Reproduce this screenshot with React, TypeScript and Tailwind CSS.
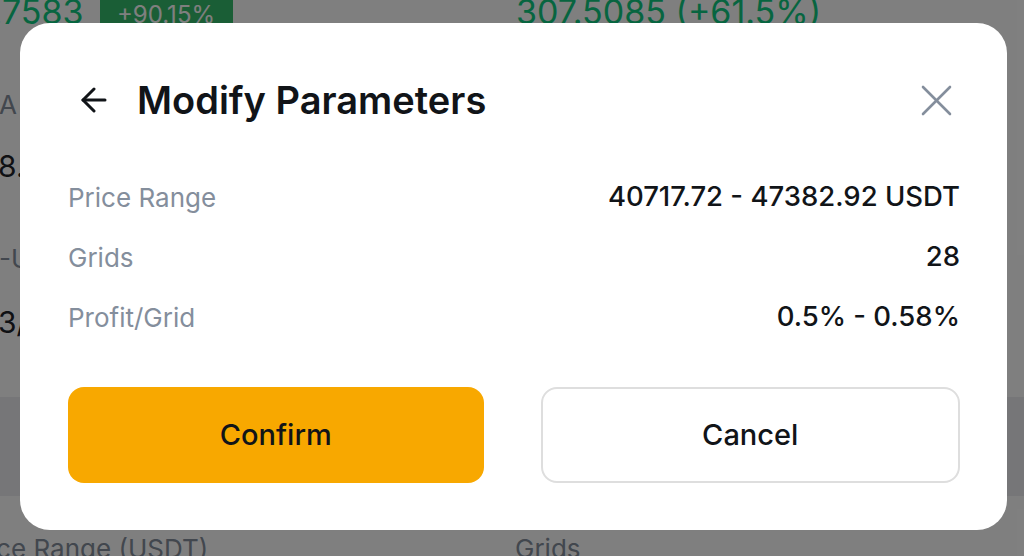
const rows = [
  { label: 'Price Range', value: '40717.72 - 47382.92 USDT' },
  { label: 'Grids', value: '28' },
  { label: 'Profit/Grid', value: '0.5% - 0.58%' },
];

function BackArrow() {
  return (
    <svg width="26" height="26" viewBox="0 0 26 26" fill="none" stroke="#111418" strokeWidth="3" strokeLinecap="round" strokeLinejoin="round">
      <path d="M24 13H2" />
      <path d="M13 2L2 13L13 24" />
    </svg>
  );
}

function CloseIcon() {
  return (
    <svg width="31" height="31" viewBox="0 0 31 31" fill="none" stroke="#848e9c" strokeWidth="2.6" strokeLinecap="round">
      <path d="M2 2L29 29" />
      <path d="M29 2L2 29" />
    </svg>
  );
}

export default function App() {
  return (
    <div className="relative w-full h-[556px] overflow-hidden bg-white font-['Inter',sans-serif]">
      {/* page behind the dialog */}
      <div className="flex flex-col">
        <div className="flex h-[30px] items-start -mt-[8px]">
          <div className="w-[516px] flex items-start">
            <span className="-ml-[28px] text-[34px] leading-[40px] text-[#0ecb81]">0.7583</span>
            <span className="ml-[16px] mt-[4px] h-[34px] w-[133px] text-center bg-[#34bc6c] text-white text-[24px] leading-[38px]">+90.15%</span>
          </div>
          <span className="text-[34px] leading-[40px] text-[#0ecb81]">307.5085 (+61.5%)</span>
        </div>
        <span className="mt-[68px] -ml-[1px] text-[26px] leading-[30px] text-[#848e9c]">A</span>
        <span className="mt-[28px] -ml-[2px] text-[30px] leading-[36px] text-[#1e2329]">8.12</span>
        <span className="mt-[60px] -ml-[1px] text-[26px] leading-[30px] text-[#848e9c]">-USDT</span>
        <span className="mt-[30px] -ml-[2px] text-[30px] leading-[36px] text-[#1e2329]">3/28</span>
        <div className="mt-[57px] h-[99px] bg-[#ececf0]" />
        <div className="flex mt-[38px]">
          <div className="w-[515px] overflow-hidden">
            <span className="block -ml-[37px] text-[26px] leading-[30px] text-[#848e9c]">Price Range (USDT)</span>
          </div>
          <span className="text-[26px] leading-[30px] text-[#848e9c]">Grids</span>
        </div>
      </div>

      {/* overlay */}
      <div className="absolute inset-0 bg-black/50" />

      {/* dialog */}
      <div className="absolute left-[20px] top-[23px] w-[987px] h-[507px] rounded-[30px] bg-white pl-[48px] pr-[47px] flex flex-col">
        <div className="mt-[45px] h-[64px] flex items-center">
          <div className="ml-[13px]">
            <BackArrow />
          </div>
          <h2 className="ml-[30px] text-[38px] font-semibold text-[#111418]">Modify Parameters</h2>
          <button className="ml-auto mr-[8px]">
            <CloseIcon />
          </button>
        </div>

        <div className="mt-[35px] flex flex-col">
          {rows.map((r) => (
            <div key={r.label} className="h-[60px] flex items-center justify-between">
              <span className="text-[26px] text-[#848e9c]">{r.label}</span>
              <span className="text-[27.5px] font-medium text-[#111418]">{r.value}</span>
            </div>
          ))}
        </div>

        <div className="mt-[40px] flex gap-[57px]">
          <button className="flex-1 h-[96px] rounded-[16px] bg-[#f8a800] text-[29px] font-medium text-[#111418]">Confirm</button>
          <button className="flex-1 h-[96px] rounded-[16px] border-2 border-[#dedede] bg-white text-[29px] font-medium text-[#111418]">Cancel</button>
        </div>
      </div>
    </div>
  );
}
